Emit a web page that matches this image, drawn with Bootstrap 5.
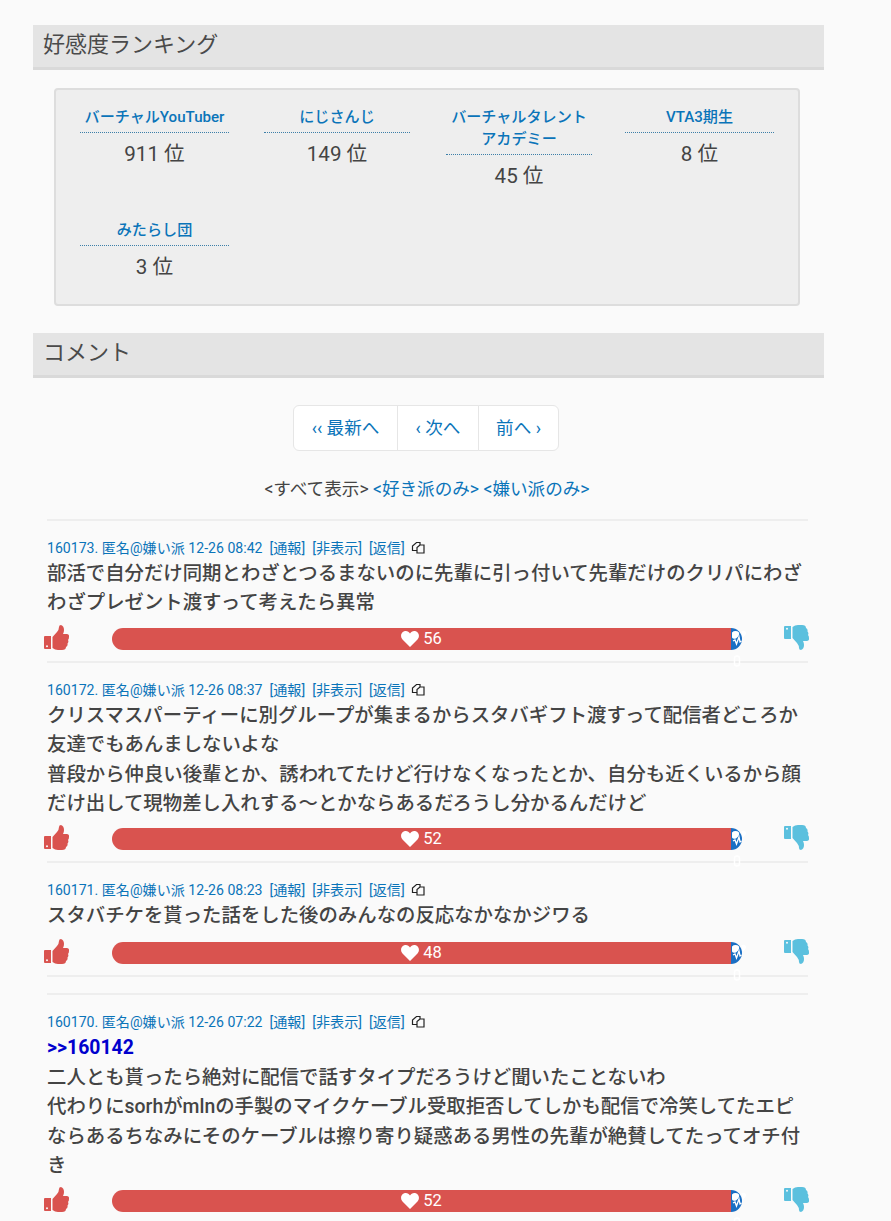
<!DOCTYPE html>
<html lang="ja"><head><meta charset="utf-8"><title>好感度ランキング</title>
<link href="https://cdn.jsdelivr.net/npm/bootstrap@5.3.0/dist/css/bootstrap.min.css" rel="stylesheet">
<style>
body{background:#fafafa;color:#444;font-family:Roboto,"Noto Sans CJK JP",sans-serif;font-size:16px;overflow:hidden}
.page-wrap{width:791px;margin-left:33px;padding-top:25px}
.sec-head{background:#e4e4e4;border-bottom:3px solid #d9d9d9;font-size:22px;font-weight:400;height:45px;line-height:40px;padding-left:10px;margin:0;color:#4a4a4a}
.rank-box{margin:18px 24px 27px 21px;background:#eee;border:2px solid #ddd;border-radius:4px;height:218px;padding:16px 0 0 24px;display:grid;grid-template-columns:184px 182px 179px 149px;row-gap:28px;align-content:start}
.rank-box>div:nth-child(1),.rank-box>div:nth-child(5){padding-right:35px}
.rank-box>div:nth-child(2){padding-right:36px}
.rank-box>div:nth-child(3){padding-right:33px}
.rank-name{color:#0a74b9;font-size:15.1px;font-weight:500;line-height:22px;text-align:center;border-bottom:1px dotted #3d7fa8;padding-bottom:4px}
.rank-val{font-size:20.6px;line-height:30px;text-align:center;margin-top:6px;color:#444}
.pager-box{height:46px;margin-top:27px;margin-left:260px;width:266px}
.pager-box .page-link{color:#0a74b9;background:#fff;border-color:#e6e6e6;height:46px;line-height:30px;padding:7px 0;text-align:center;font-size:17.6px}
.pager-box .page-item:nth-child(1){width:105px}
.pager-box .page-item:nth-child(2){width:81px}
.pager-box .page-item:nth-child(3){width:80px}
.filter-line{text-align:center;margin:27px 0 19px;font-size:17.6px;line-height:22px;width:788px}
.filter-line a,.cmt-meta a{color:#0a74b9;text-decoration:none}
.cmt{margin-left:14px;width:761px;border-top:2px solid #eee;padding-top:17px}
.cmt-spacer{padding-top:16px}
.cmt-meta{font-size:14.1px;line-height:20px;color:#0a74b9;white-space:nowrap;display:flex;align-items:center}
.cmt-meta a{margin-left:7px}
.cmt-meta svg{margin-left:6px}
.cmt-body{font-size:19.4px;font-weight:500;line-height:29.4px;margin-top:1px;color:#444;white-space:nowrap}
.cmt-anchor{color:#0000cd;font-weight:700}
.vote-row{display:flex;align-items:flex-end;height:25px;margin:7px 0 11px -3px;position:relative;width:765px}
.vote-row.vote-single{margin-top:8.5px}
.vote-bar{margin-left:43px;width:619px;height:22px;border-radius:11px 0 0 11px;background:#d9534f;color:#fff;font-size:16.5px;line-height:22px;position:relative;display:flex;align-items:center;justify-content:center;gap:4px}
.vote-end{position:absolute;left:100%;top:0;overflow:visible}
.vote-down{margin-left:53px}
</style></head><body>
<div class="page-wrap">
<h2 class="sec-head">好感度ランキング</h2>
<div class="rank-box">
<div><div class="rank-name">バーチャルYouTuber</div><div class="rank-val">911 位</div></div>
<div><div class="rank-name">にじさんじ</div><div class="rank-val">149 位</div></div>
<div><div class="rank-name">バーチャルタレント<br>アカデミー</div><div class="rank-val">45 位</div></div>
<div><div class="rank-name">VTA3期生</div><div class="rank-val">8 位</div></div>
<div><div class="rank-name">みたらし団</div><div class="rank-val">3 位</div></div>
</div>
<h2 class="sec-head">コメント</h2>
<ul class="pagination pager-box">
<li class="page-item"><a class="page-link" href="#">‹‹ 最新へ</a></li>
<li class="page-item"><a class="page-link" href="#">‹ 次へ</a></li>
<li class="page-item"><a class="page-link" href="#">前へ ›</a></li>
</ul>
<div class="filter-line">&lt;すべて表示&gt; <a href="#">&lt;好き派のみ&gt;</a> <a href="#">&lt;嫌い派のみ&gt;</a></div>

<svg width="0" height="0" class="position-absolute"><defs>
<symbol id="thumb" viewBox="0 0 25 25"><path fill-rule="evenodd" d="M1 11h6v13H1a1 1 0 0 1-1-1V12a1 1 0 0 1 1-1zM3 20.300a1 1 0 1 0 0 2 1 1 0 0 0 0-2z"/><path d="M8.500 12 13 7q2-2.500 2-5 0-2 2-2 3 1 3 5 0 2-1 4h4q2.500.5 2 3 0 2-1 3 1 2-.5 3.500.5 2.500-1.500 3.500 0 3-4 3h-4q-3 0-5.500-2z"/></symbol>
<symbol id="bar-end" viewBox="0 0 16 40"><path fill="#1a6fc4" d="M0 0a11 11 0 0 1 11 11 11 11 0 0 1-11 11z"/><path fill="#fff" d="M1 4.500a5 5 0 0 1 7 0q1 3-3 6-3 1-4-1zM10.500 3q3.500-1 4.500 1.500 0 3-3.500 5z"/><path fill="none" stroke="#fff" stroke-width="1.300" d="M2 13l2-1 1.500 4 2.500-7 1 5 1.500-1"/><rect x="3.500" y="28" width="5" height="10" rx="2.500" fill="none" stroke="#fff" stroke-width="1.500"/></symbol>
<symbol id="copy" viewBox="0 0 14 14"><path fill="none" stroke="#222" stroke-width="1.200" d="M5.500 1.500H9V4h4v8H6V9.500H1.500V5zM6 9.500V6.500L9 4"/></symbol>
<symbol id="heart" viewBox="0 0 18 16"><path fill="#fff" d="M9 16 1.500 8.500C-1.500 5 .5 0 4.800 0 6.700 0 8 1 9 2.500 10 1 11.300 0 13.200 0c4.300 0 6.300 5 3.300 8.500z"/></symbol>
</defs></svg>

<div class="cmt">
<div class="cmt-meta">160173. 匿名@嫌い派 12-26 08:42<a href="#">[通報]</a><a href="#">[非表示]</a><a href="#">[返信]</a><svg width="14" height="14"><use href="#copy"/></svg></div>
<div class="cmt-body">部活で自分だけ同期とわざとつるまないのに先輩に引っ付いて先輩だけのクリパにわざ<br>わざプレゼント渡すって考えたら異常</div>
<div class="vote-row"><svg width="25" height="25" fill="#d9534f"><use href="#thumb"/></svg><div class="vote-bar"><svg width="18" height="16"><use href="#heart"/></svg>56<svg class="vote-end" width="16" height="40"><use href="#bar-end"/></svg></div><svg class="vote-down" width="25" height="25" fill="#5bc0de" transform="scale(1 -1)"><use href="#thumb"/></svg></div>
</div>
<div class="cmt">
<div class="cmt-meta">160172. 匿名@嫌い派 12-26 08:37<a href="#">[通報]</a><a href="#">[非表示]</a><a href="#">[返信]</a><svg width="14" height="14"><use href="#copy"/></svg></div>
<div class="cmt-body">クリスマスパーティーに別グループが集まるからスタバギフト渡すって配信者どころか<br>友達でもあんましないよな<br>普段から仲良い後輩とか、誘われてたけど行けなくなったとか、自分も近くいるから顔<br>だけ出して現物差し入れする～とかならあるだろうし分かるんだけど</div>
<div class="vote-row"><svg width="25" height="25" fill="#d9534f"><use href="#thumb"/></svg><div class="vote-bar"><svg width="18" height="16"><use href="#heart"/></svg>52<svg class="vote-end" width="16" height="40"><use href="#bar-end"/></svg></div><svg class="vote-down" width="25" height="25" fill="#5bc0de" transform="scale(1 -1)"><use href="#thumb"/></svg></div>
</div>
<div class="cmt">
<div class="cmt-meta">160171. 匿名@嫌い派 12-26 08:23<a href="#">[通報]</a><a href="#">[非表示]</a><a href="#">[返信]</a><svg width="14" height="14"><use href="#copy"/></svg></div>
<div class="cmt-body">スタバチケを貰った話をした後のみんなの反応なかなかジワる</div>
<div class="vote-row vote-single"><svg width="25" height="25" fill="#d9534f"><use href="#thumb"/></svg><div class="vote-bar"><svg width="18" height="16"><use href="#heart"/></svg>48<svg class="vote-end" width="16" height="40"><use href="#bar-end"/></svg></div><svg class="vote-down" width="25" height="25" fill="#5bc0de" transform="scale(1 -1)"><use href="#thumb"/></svg></div>
</div>
<div class="cmt cmt-spacer"></div>
<div class="cmt">
<div class="cmt-meta">160170. 匿名@嫌い派 12-26 07:22<a href="#">[通報]</a><a href="#">[非表示]</a><a href="#">[返信]</a><svg width="14" height="14"><use href="#copy"/></svg></div>
<div class="cmt-body"><span class="cmt-anchor">&gt;&gt;160142</span><br>二人とも貰ったら絶対に配信で話すタイプだろうけど聞いたことないわ<br>代わりにsorhがmlnの手製のマイクケーブル受取拒否してしかも配信で冷笑してたエピ<br>ならあるちなみにそのケーブルは擦り寄り疑惑ある男性の先輩が絶賛してたってオチ付<br>き</div>
<div class="vote-row"><svg width="25" height="25" fill="#d9534f"><use href="#thumb"/></svg><div class="vote-bar"><svg width="18" height="16"><use href="#heart"/></svg>52<svg class="vote-end" width="16" height="40"><use href="#bar-end"/></svg></div><svg class="vote-down" width="25" height="25" fill="#5bc0de" transform="scale(1 -1)"><use href="#thumb"/></svg></div>
</div>
</div>
<script src="https://cdn.jsdelivr.net/npm/bootstrap@5.3.0/dist/js/bootstrap.bundle.min.js"></script>
</body></html>
